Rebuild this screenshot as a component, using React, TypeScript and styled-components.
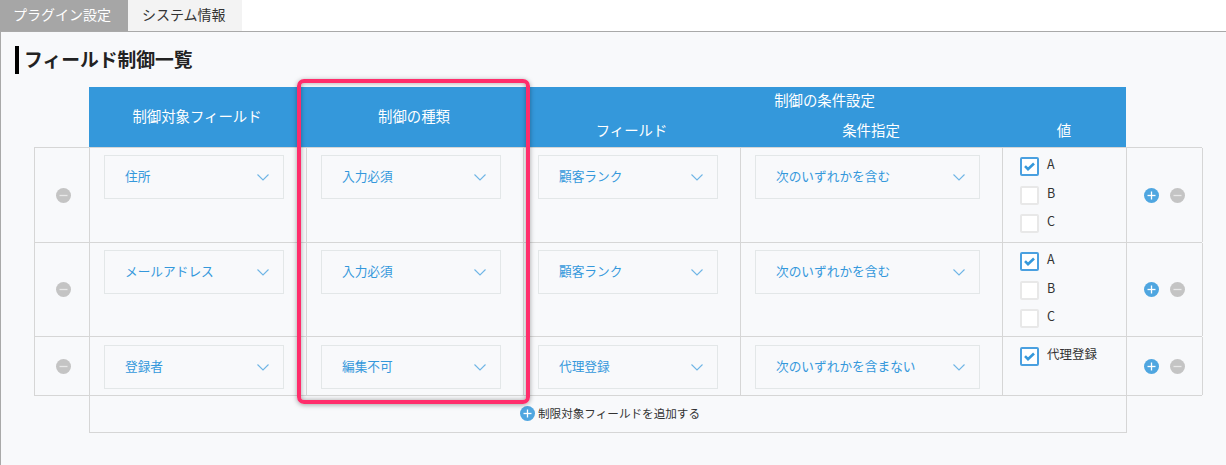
import * as React from "react"
import styled, { createGlobalStyle } from "styled-components"

const Global = createGlobalStyle`
  html, body {
    margin: 0;
    padding: 0;
    background: #fff;
    font-family: "Noto Sans CJK JP", "Noto Sans", sans-serif;
  }
  * {
    box-sizing: border-box;
  }
`

const Page = styled.div`
  position: relative;
  width: 1226px;
  height: 465px;
  overflow: hidden;
`

const Tabs = styled.div`
  display: flex;
  height: 31px;
`

const Tab = styled.div<{ $active?: boolean }>`
  width: ${(p) => (p.$active ? "128px" : "114px")};
  padding: 0 0 4px ${(p) => (p.$active ? "13px" : "14px")};
  display: flex;
  align-items: center;
  font-size: 14px;
  background: ${(p) => (p.$active ? "#a6a6a6" : "#f3f3f3")};
  color: ${(p) => (p.$active ? "#fff" : "#333")};
`

const Panel = styled.div`
  height: 434px;
  background: #f8f9fb;
  border-top: 1px solid #a9a9a9;
  border-left: 1px solid #a9a9a9;
  padding: 14px 0 0 14px;
`

const Heading = styled.h2`
  margin: 0;
  height: 28px;
  padding-left: 5px;
  border-left: 4px solid #000;
  font-size: 18.8px;
  font-weight: 700;
  line-height: 26px;
  color: #222;
`

const Table = styled.div`
  margin: 13px 0 0 19px;
  width: 1168px;
`

const HeadRow = styled.div`
  margin-left: 55px;
  width: 1037px;
  height: 60px;
  display: grid;
  grid-template-columns: 216px 218px 603px;
  background: #3498db;
  color: #fff;
  font-size: 14.4px;
`

const HeadCell = styled.div`
  display: flex;
  align-items: center;
  justify-content: center;
  padding-bottom: 4px;
`

const HeadGroup = styled.div`
  display: grid;
  grid-template-columns: 217px 262px 124px;
  grid-template-rows: 29px 31px;
`

const HeadGroupTitle = styled(HeadCell)`
  grid-column: 1 / 4;
`

const Cell = styled.div`
  border-right: 1px solid #d6d6d6;
  padding: 7px 0 0 14px;
`

const Row = styled.div<{ $height: number; $inset: number }>`
  display: grid;
  grid-template-columns: 55px 217px 217px 217px 262px 124px 76px;
  height: ${(p) => p.$height}px;
  border-bottom: 1px solid #d6d6d6;
  border-left: 1px solid #d6d6d6;
  ${HeadRow} + & {
    border-top: 1px solid #d6d6d6;
  }
  > ${Cell} {
    padding-top: ${(p) => p.$inset}px;
  }
`

const ActionCell = styled.div`
  border-right: 1px solid #d6d6d6;
  display: flex;
  align-items: center;
  justify-content: center;
  gap: 11px;
`

const RemoveCell = styled(ActionCell)`
  padding-left: 2px;
`

const Select = styled.div<{ $wide?: boolean }>`
  width: ${(p) => (p.$wide ? "225px" : "180px")};
  height: 44px;
  border: 1px solid #e3e7e8;
  padding: 0 14px 0 20px;
  display: flex;
  align-items: center;
  justify-content: space-between;
  font-size: 12.7px;
  color: #3498db;
`

const SelectText = styled.span`
  margin-bottom: 3px;
`

const Options = styled.div`
  display: flex;
  flex-direction: column;
  gap: 9.5px;
  padding: 2px 0 0 3px;
`

const Option = styled.label`
  display: flex;
  align-items: flex-start;
  gap: 8px;
  height: 19px;
  font-size: 12.5px;
  line-height: 14px;
  color: #333;
`

const Box = styled.span<{ $checked?: boolean }>`
  width: 19px;
  height: 19px;
  flex: none;
  border-radius: 2px;
  background: #fff;
  border: 2px solid ${(p) => (p.$checked ? "#4aa0e0" : "#e8e8e8")};
  display: flex;
  align-items: center;
  justify-content: center;
`

const RoundButton = styled.span<{ $plus?: boolean }>`
  width: 15px;
  height: 15px;
  flex: none;
  border-radius: 50%;
  background: ${(p) => (p.$plus ? "#4fa6e0" : "#c4c4c4")};
  display: flex;
  align-items: center;
  justify-content: center;
`

const AddRow = styled.div`
  margin-left: 55px;
  width: 1038px;
  height: 37px;
  padding: 0 0 2px 4px;
  border: 1px solid #d6d6d6;
  border-top: 0;
  display: flex;
  align-items: center;
  justify-content: center;
  gap: 3px;
  font-size: 11.6px;
  color: #333;
`

const Highlight = styled.div`
  position: absolute;
  left: 297px;
  top: 79px;
  width: 233px;
  height: 325px;
  border: 4px solid #ff2d6b;
  border-radius: 7px;
  box-shadow: 0 1px 5px rgba(0, 0, 0, 0.35), inset 0 0 5px rgba(0, 0, 0, 0.35);
  pointer-events: none;
`

const Chevron = () => (
  <svg width="12" height="7" viewBox="0 0 12 7" fill="none" stroke="#6fb5e6" strokeWidth="1.1">
    <path d="M0.5 0.5L6 6L11.5 0.5" />
  </svg>
)

const Check = () => (
  <svg width="11" height="9" viewBox="0 0 11 9" fill="none" stroke="#3498db" strokeWidth="2.6">
    <path d="M1 4.2l3 3L10 1.5" />
  </svg>
)

const Round = ({ plus }: { plus?: boolean }) => (
  <RoundButton $plus={plus}>
    <svg width="9" height="9" viewBox="0 0 9 9" stroke={plus ? "#fff" : "#e8e8e8"} strokeWidth="1.3">
      <path d="M0.5 4.5h8" />
      {plus && <path d="M4.5 0.5v8" />}
    </svg>
  </RoundButton>
)

type RowData = {
  height: number
  inset: number
  field: string
  kind: string
  condField: string
  cond: string
  options: { label: string; checked?: boolean }[]
}

const rows: RowData[] = [
  {
    height: 96,
    inset: 7,
    field: "住所",
    kind: "入力必須",
    condField: "顧客ランク",
    cond: "次のいずれかを含む",
    options: [{ label: "A", checked: true }, { label: "B" }, { label: "C" }],
  },
  {
    height: 94,
    inset: 7,
    field: "メールアドレス",
    kind: "入力必須",
    condField: "顧客ランク",
    cond: "次のいずれかを含む",
    options: [{ label: "A", checked: true }, { label: "B" }, { label: "C" }],
  },
  {
    height: 59,
    inset: 8,
    field: "登録者",
    kind: "編集不可",
    condField: "代理登録",
    cond: "次のいずれかを含まない",
    options: [{ label: "代理登録", checked: true }],
  },
]

const Dropdown = ({ value, wide }: { value: string; wide?: boolean }) => (
  <Select $wide={wide}>
    <SelectText>{value}</SelectText>
    <Chevron />
  </Select>
)

const App = () => {
  return (
    <Page>
      <Global />
      <Tabs>
        <Tab $active>プラグイン設定</Tab>
        <Tab>システム情報</Tab>
      </Tabs>
      <Panel>
        <Heading>フィールド制御一覧</Heading>
        <Table>
          <HeadRow>
            <HeadCell>制御対象フィールド</HeadCell>
            <HeadCell>制御の種類</HeadCell>
            <HeadGroup>
              <HeadGroupTitle>制御の条件設定</HeadGroupTitle>
              <HeadCell>フィールド</HeadCell>
              <HeadCell>条件指定</HeadCell>
              <HeadCell>値</HeadCell>
            </HeadGroup>
          </HeadRow>
          {rows.map((r) => (
            <Row key={r.field} $height={r.height} $inset={r.inset}>
              <RemoveCell>
                <Round />
              </RemoveCell>
              <Cell>
                <Dropdown value={r.field} />
              </Cell>
              <Cell>
                <Dropdown value={r.kind} />
              </Cell>
              <Cell>
                <Dropdown value={r.condField} />
              </Cell>
              <Cell>
                <Dropdown value={r.cond} wide />
              </Cell>
              <Cell>
                <Options>
                  {r.options.map((o) => (
                    <Option key={o.label}>
                      <Box $checked={o.checked}>{o.checked && <Check />}</Box>
                      {o.label}
                    </Option>
                  ))}
                </Options>
              </Cell>
              <ActionCell>
                <Round plus />
                <Round />
              </ActionCell>
            </Row>
          ))}
          <AddRow>
            <Round plus />
            制限対象フィールドを追加する
          </AddRow>
        </Table>
      </Panel>
      <Highlight />
    </Page>
  )
}

export default App
